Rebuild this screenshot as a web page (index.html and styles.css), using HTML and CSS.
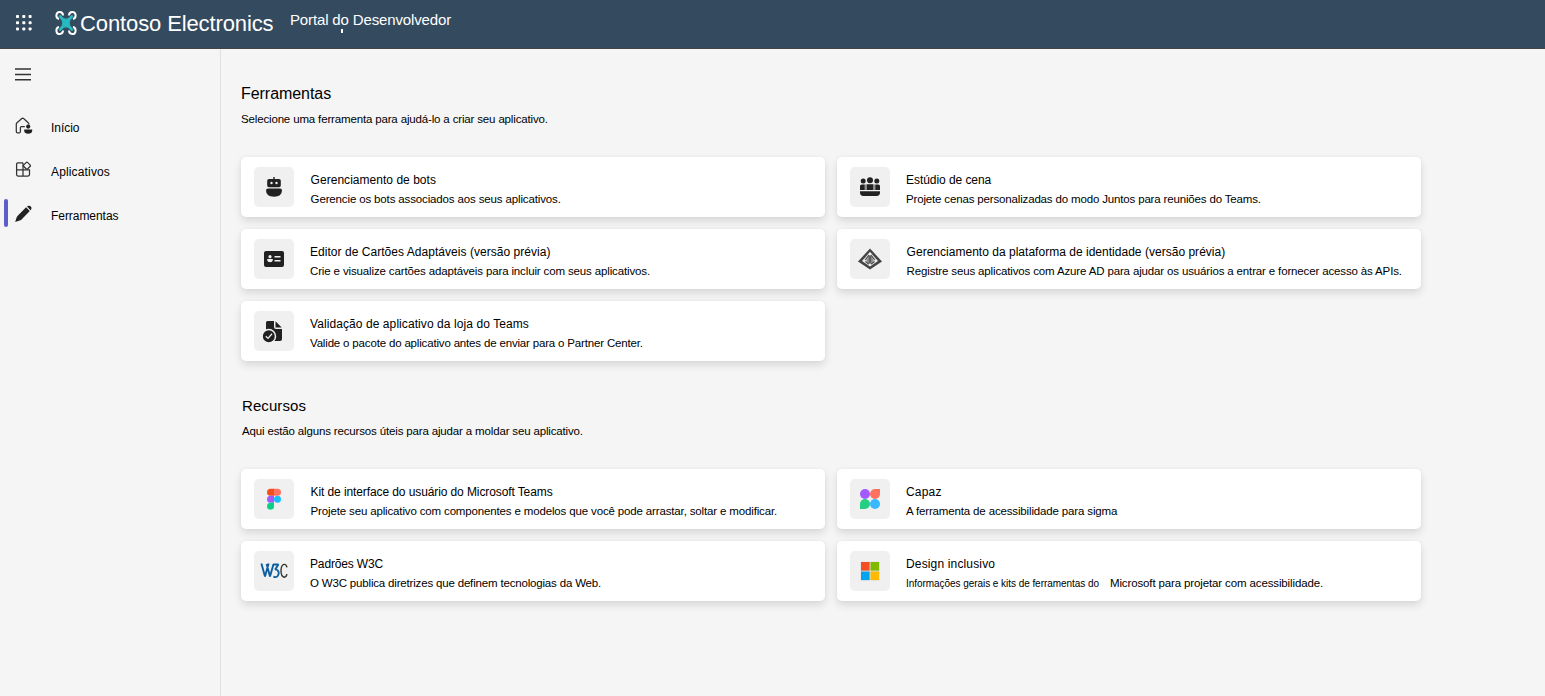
FILE: index.html
```html
<!DOCTYPE html>
<html lang="pt">
<head>
<meta charset="utf-8">
<title>Portal do Desenvolvedor</title>
<link rel="stylesheet" href="styles.css">
</head>
<body>
<header class="topbar">
  <svg class="waffle" width="16" height="16" viewBox="0 0 16 16" fill="#fff"><rect x="0" y="0" width="3" height="3" rx=".8"/><rect x="6.3" y="0" width="3" height="3" rx=".8"/><rect x="12.6" y="0" width="3" height="3" rx=".8"/><rect x="0" y="6.3" width="3" height="3" rx=".8"/><rect x="6.3" y="6.3" width="3" height="3" rx=".8"/><rect x="12.6" y="6.3" width="3" height="3" rx=".8"/><rect x="0" y="12.4" width="3" height="3" rx=".8"/><rect x="6.3" y="12.4" width="3" height="3" rx=".8"/><rect x="12.6" y="12.4" width="3" height="3" rx=".8"/></svg>
  <svg class="logo" width="22" height="26" viewBox="0 0 22 26"><g fill="none" stroke="#fff" stroke-width="2"><path d="M4 9A3.3 3.6 0 1 1 8 5.4"/><path d="M14 5.4A3.3 3.6 0 1 1 18 9"/><path d="M4 17A3.3 3.6 0 1 0 8 20.6"/><path d="M14 20.6A3.3 3.6 0 1 0 18 17"/></g><path d="M5 5.2L8.8 8.6Q11 9.8 13.2 8.6L17 5.2L18 6.4L14.8 10.6Q13.8 13 14.8 15.4L18 19.6L17 20.8L13.2 17.4Q11 16.2 8.8 17.4L5 20.8L4 19.6L7.2 15.4Q8.2 13 7.2 10.6L4 6.4Z" fill="#28b9c0" stroke="#28b9c0" stroke-width=".9"/></svg>
  <div class="brand">Contoso Electronics</div>
  <div class="portal">Portal do Desenvolvedor<i class="tick"></i></div>
</header>
<div class="body">
  <nav class="side">
    <svg class="menu" width="16" height="13" viewBox="0 0 16 13" stroke="#333" stroke-width="1.5"><path d="M0 1h16M0 6.4h16M0 11.7h16"/></svg>
    <a class="nav"><svg width="18" height="18" viewBox="0 0 18 18"><path d="M4.9 15.8H2.6Q1.3 15.8 1.3 14.5V7.2Q1.3 6.4 2 5.8L6.8 1.6Q7.7.9 8.6 1.6L13.2 5.8Q13.9 6.4 13.9 7.6M5.4 15.8V10.6Q5.4 9.6 6.4 9.6H9.8" fill="none" stroke="#333" stroke-width="1.25"/><circle cx="13.2" cy="9.6" r="2.1" fill="#222"/><path d="M9.2 12.6H17.2V14Q16.8 16.8 13.2 16.8T9.2 14Z" fill="#222"/></svg><span class="s-inicio">Início</span></a>
    <a class="nav"><svg width="18" height="18" viewBox="0 0 18 18" fill="none" stroke="#333" stroke-width="1.25"><path d="M8 1.8H3Q1.6 1.8 1.6 3.2V13.6Q1.6 15 3 15H13Q14.5 15 14.5 13.6V8.8H1.6M8 1.8V15"/><path d="M11.3 1.4Q11.9.9 12.5 1.4L15.2 4.1Q15.8 4.7 15.2 5.3L12.5 8Q11.9 8.5 11.3 8L8.6 5.3Q8 4.7 8.6 4.1Z" fill="#f5f5f5"/></svg><span class="s-apps">Aplicativos</span></a>
    <a class="nav active"><svg width="18" height="18" viewBox="0 0 18 18" fill="#222"><path d="M11.1 2.3L14.8 6L6.3 14.7Q5.7 15.2 4.6 15.6L.2 17L1.6 12.6Q1.9 11.5 2.5 10.9Z"/><path d="M12 1.5Q13.6 0 15.4 1.1Q17.4 3 16.1 4.7L15.6 5.2Z"/></svg><span class="s-tools">Ferramentas</span></a>
  </nav>
  <main class="main">
    <section class="tools">
      <h1>Ferramentas</h1>
      <p class="lead">Selecione uma ferramenta para ajudá-lo a criar seu aplicativo.</p>
      <div class="grid">
        <article class="card"><div class="tile"><svg width="24" height="24" viewBox="0 0 24 24"><path d="M11.3 2h1.4v2H17Q18.8 4 18.8 5.8V10.4Q18.8 12.2 17 12.2H7Q5.2 12.2 5.2 10.4V5.8Q5.2 4 7 4H11.3Z" fill="#212121"/><circle cx="9.5" cy="8" r="1.2" fill="#f0f0f0"/><circle cx="14.5" cy="8" r="1.2" fill="#f0f0f0"/><path d="M6 13.6H18Q20 13.6 20 15.6Q19.8 21.8 12 21.8T4 15.6Q4 13.6 6 13.6Z" fill="#212121"/></svg></div><div class="text nudge"><h2 class="s-bots">Gerenciamento de bots</h2><p class="s-botsd">Gerencie os bots associados aos seus aplicativos.</p></div></article>
        <article class="card"><div class="tile"><svg width="24" height="24" viewBox="0 0 24 24" fill="#212121"><circle cx="5.2" cy="6" r="2.5"/><circle cx="12" cy="5.2" r="3"/><circle cx="18.8" cy="6" r="2.5"/><path d="M3.6 9.5H6.8V15H2V11Q2 9.5 3.6 9.5ZM17.2 9.5H20.4Q22 9.5 22 11V15H17.2ZM8.5 9.2H15.5V15H8.5ZM2 16.3H22V17.6Q22 21 18.6 21H5.4Q2 21 2 17.6Z"/><path d="M6.8 9.5h1v5.5h-1ZM16.2 9.5h1v5.5h-1Z" fill="#777"/></svg></div><div class="text"><h2 class="s-scene">Estúdio de cena</h2><p class="s-scened">Projete cenas personalizadas do modo Juntos para reuniões do Teams.</p></div></article>
        <article class="card"><div class="tile"><svg width="24" height="24" viewBox="0 0 24 24"><rect x="2" y="4" width="20" height="16" rx="2" fill="#212121"/><g fill="#f0f0f0"><circle cx="8" cy="9.7" r="1.6"/><path d="M5.2 12H10.8V13.3Q10.5 15.3 8 15.3T5.2 13.3ZM12.5 9H18.5V10.6H12.5ZM12.5 13H18.5V14.6H12.5Z"/></g></svg></div><div class="text"><h2 class="s-editor">Editor de Cartões Adaptáveis (versão prévia)</h2><p class="s-editord">Crie e visualize cartões adaptáveis para incluir com seus aplicativos.</p></div></article>
        <article class="card"><div class="tile"><svg width="24" height="24" viewBox="0 0 24 24"><path d="M12 1.6L24 14.4L12 22.6L0 14.4Z" fill="#444"/><path d="M12 5L20 14L12 19.6L4 14Z" fill="#e4e4e4"/><path d="M12 7L15.6 13.4L12 17.4L8.4 13.4Z" fill="#888"/><path d="M12 6V19M12 7L6.4 14M12 7L17.6 14M7 14L12 18L17 14" fill="none" stroke="#444" stroke-width="1.2"/><g fill="#f0f0f0"><circle cx="12" cy="7" r="1.5"/><circle cx="6.4" cy="13.8" r="1.4"/><circle cx="17.6" cy="13.8" r="1.4"/><circle cx="12" cy="17.8" r="1.4"/></g></svg></div><div class="text nudge"><h2 class="s-id">Gerenciamento da plataforma de identidade (versão prévia)</h2><p class="s-idd">Registre seus aplicativos com Azure AD para ajudar os usuários a entrar e fornecer acesso às APIs.</p></div></article>
        <article class="card"><div class="tile"><svg width="24" height="24" viewBox="0 0 24 24"><path d="M5.5 2H12V8Q12 10 14 10H20V20Q20 22 18 22H4V3.5Q4 2 5.5 2ZM13.5 2.3L19.7 8.5H13.5Z" fill="#212121"/><circle cx="6.8" cy="17.2" r="6.7" fill="#212121" stroke="#f0f0f0" stroke-width="1.5"/><path d="M3.8 17.3L6 19.4L10 14.8" fill="none" stroke="#f0f0f0" stroke-width="1.3"/></svg></div><div class="text"><h2 class="s-val">Validação de aplicativo da loja do Teams</h2><p class="s-vald">Valide o pacote do aplicativo antes de enviar para o Partner Center.</p></div></article>
      </div>
    </section>
    <section class="resources">
      <h1 class="s-res">Recursos</h1>
      <p class="lead">Aqui estão alguns recursos úteis para ajudar a moldar seu aplicativo.</p>
      <div class="grid">
        <article class="card"><div class="tile"><svg width="24" height="24" viewBox="0 0 24 24"><path d="M12 1.7H8.5A3.5 3.5 0 0 0 8.5 8.7H12Z" fill="#f24e1e"/><path d="M12 1.7H15.5A3.5 3.5 0 0 1 15.5 8.7H12Z" fill="#ff7262"/><path d="M12 8.7H8.5A3.5 3.5 0 0 0 8.5 15.7H12Z" fill="#a259ff"/><circle cx="15.5" cy="12.2" r="3.5" fill="#1abcfe"/><path d="M12 15.7H8.5A3.5 3.5 0 1 0 12 19.2Z" fill="#0acf83"/></svg></div><div class="text nudge"><h2 class="s-kit">Kit de interface do usuário do Microsoft Teams</h2><p class="s-kitd">Projete seu aplicativo com componentes e modelos que você pode arrastar, soltar e modificar.</p></div></article>
        <article class="card"><div class="tile"><svg width="24" height="24" viewBox="0 0 24 24"><circle cx="7" cy="7" r="5" fill="#a259ff"/><path d="M22 2V7A5 5 0 1 1 17 2Z" fill="#ff7262"/><path d="M2 22V17A5 5 0 1 1 7 22Z" fill="#24cf83"/><circle cx="17" cy="17" r="5" fill="#38b8ff"/></svg></div><div class="text"><h2 class="s-capaz">Capaz</h2><p class="s-capazd">A ferramenta de acessibilidade para sigma</p></div></article>
        <article class="card"><div class="tile"><svg width="28" height="20" viewBox="0 0 28 20" fill="none" stroke="#0c5ea0" stroke-width="1.9"><path d="M1.4 2.6L5 15.6L8.6 2.6M6.6 3L10 15.6L13.4 3.5H18.4L15.2 8.4Q19 9 18.7 12.6Q17.6 17.4 13.4 15.6" stroke-linejoin="bevel"/><path d="M27 6.4Q26.2 3 24 3.4Q21 4.2 21 9.8T24 16.2Q26.2 16.4 27 13.2" stroke="#38352c" stroke-width="1.4"/></svg></div><div class="text"><h2 class="s-w3c">Padrões W3C</h2><p class="s-w3cd">O W3C publica diretrizes que definem tecnologias da Web.</p></div></article>
        <article class="card"><div class="tile"><svg width="24" height="24" viewBox="0 0 24 24"><path d="M2.6 2.6h18.8v18.8H2.6Z" fill="#ddd"/><path d="M3 3h8.6v8.6H3Z" fill="#f25022"/><path d="M12.5 3h8.6v8.6h-8.6Z" fill="#7fba00"/><path d="M3 12.5h8.6v8.6H3Z" fill="#00a4ef"/><path d="M12.5 12.5h8.6v8.6h-8.6Z" fill="#ffb900"/></svg></div><div class="text"><h2 class="s-design">Design inclusivo</h2><p class="split"><span class="small">Informações gerais e kits de ferramentas do</span><span class="s-ms">Microsoft para projetar com acessibilidade.</span></p></div></article>
      </div>
    </section>
  </main>
</div>
</body>
</html>
```
FILE: styles.css
```css
* { box-sizing: border-box; }
body { margin: 0; height: 696px; display: flex; flex-direction: column; overflow: hidden; background: #f5f5f5; color: #000; font-family: "Liberation Sans", Arial, sans-serif; }
h1, h2, p { margin: 0; font-weight: 400; white-space: nowrap; }
svg { display: block; flex: none; }

.topbar { height: 49px; flex: none; display: flex; align-items: flex-start; background: #344a5f; border-bottom: 1px solid #444; color: #fff; white-space: nowrap; }
.waffle { margin: 15px 0 0 16px; }
.logo { margin: 10px 0 0 23px; }
.brand { margin: 11px 0 0 3px; width: 194px; font-size: 22px; line-height: 25px; letter-spacing: -0.113px; }
.portal { margin: 11px 0 0 16px; font-size: 15px; line-height: 18px; letter-spacing: -0.14px; position: relative; }
.tick { position: absolute; left: 51px; top: 18px; width: 2px; height: 4px; background: #fff; }

.body { flex: 1; display: flex; min-height: 0; }
.side { width: 221px; flex: none; border-right: 1px solid #e0e0e0; padding-top: 19px; }
.menu { margin: 0 0 24px 15px; }
.nav { height: 44px; display: flex; align-items: center; padding-left: 15px; font-size: 12px; }
.nav svg { margin-top: -3px; }
.nav span { margin: 2px 0 0 18px; }
.nav.active { padding-left: 4px; }
.nav.active::before { content: ""; width: 4px; height: 28px; margin: -5px 7px 0 0; border-radius: 2px; background: #5b5fc7; }

.main { padding: 33px 0 0 20px; }
h1 { height: 24px; font-size: 16px; line-height: 24px; letter-spacing: -0.05px; }
.lead { margin-top: 4px; font-size: 11.5px; line-height: 18px; letter-spacing: -0.155px; }
.grid { margin-top: 29px; display: grid; grid-template-columns: 584px 584px; gap: 12px; }
.resources { margin-top: 33px; }
.resources h1 { padding-left: 1px; font-size: 15px; }
.resources .lead { padding-left: 1px; }

.card { height: 60px; padding: 10px 13px; display: flex; gap: 16px; background: #fff; border-radius: 5px; box-shadow: 0 4px 8px rgba(0, 0, 0, .12), 0 0 3px rgba(0, 0, 0, .04); }
.tile { width: 40px; height: 40px; flex: none; display: flex; align-items: center; justify-content: center; border-radius: 5px; background: #f0f0f0; }
.text { padding-top: 4px; }
.text.nudge { padding-left: 0.6px; }
h2 { font-size: 12px; line-height: 18px; }
.text p { font-size: 11.5px; line-height: 20px; }
.split { display: flex; gap: 10px; }
.split .small { width: 194px; padding-top: 1px; font-size: 10px; letter-spacing: -0.05px; }

.s-inicio { letter-spacing: -0.03px; }
.s-apps { letter-spacing: 0.15px; }
.s-tools { letter-spacing: -0.05px; }
.s-bots { letter-spacing: 0.03px; }
.s-botsd { letter-spacing: -0.14px; }
.s-editor { letter-spacing: 0.04px; }
.s-editord { letter-spacing: -0.138px; }
.s-val { letter-spacing: 0.08px; }
.s-vald { letter-spacing: -0.17px; }
.s-scene { letter-spacing: -0.06px; }
.s-scened { letter-spacing: -0.158px; }
.s-id { letter-spacing: 0.02px; }
.s-idd { letter-spacing: -0.145px; }
.s-res { letter-spacing: 0.08px; }
.s-kit { letter-spacing: -0.1px; }
.s-kitd { letter-spacing: -0.148px; }
.s-w3c { letter-spacing: -0.15px; }
.s-w3cd { letter-spacing: -0.175px; }
.s-capaz { letter-spacing: 0.2px; }
.s-capazd { letter-spacing: -0.148px; }
.s-design { letter-spacing: 0.15px; }
.s-ms { letter-spacing: -0.13px; }
```
